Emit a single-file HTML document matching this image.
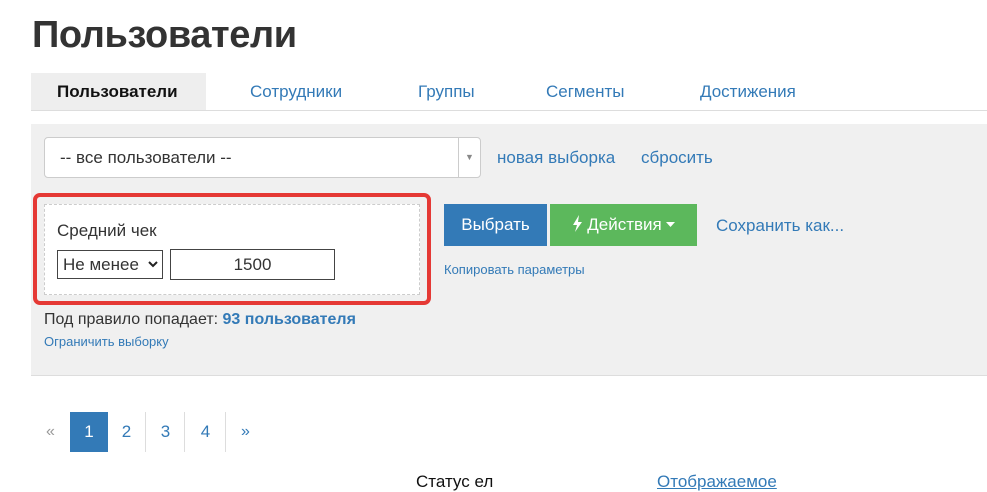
<!DOCTYPE html>
<html><head><meta charset="utf-8"><style>
*{box-sizing:border-box;margin:0;padding:0}
body{width:987px;height:479px;overflow:hidden;background:#fff;font-family:"Liberation Sans","DejaVu Sans",sans-serif;color:#333;position:relative}
.a{position:absolute}
h1{position:absolute;left:32px;top:14px;font-size:38px;font-weight:bold;color:#333;letter-spacing:-0.4px}
.tab{position:absolute;top:73px;height:37px;line-height:37px;font-size:17px;color:#337ab7}
.blue{color:#337ab7}
</style></head><body>
<h1>Пользователи</h1>
<div class="a" style="left:31px;top:73px;width:175px;height:38px;background:#eee"></div>
<div class="tab" style="left:57px;color:#111;font-weight:bold">Пользователи</div>
<div class="tab" style="left:250px">Сотрудники</div>
<div class="tab" style="left:418px">Группы</div>
<div class="tab" style="left:546px">Сегменты</div>
<div class="tab" style="left:700px">Достижения</div>
<div class="a" style="left:31px;top:110px;width:956px;height:1px;background:#ddd"></div>
<div class="a" style="left:31px;top:124px;width:956px;height:252px;background:#f0f0f0;border-bottom:1px solid #ddd"></div>
<div class="a" style="left:44px;top:137px;width:437px;height:41px;background:#fff;border:1px solid #ccc;border-radius:4px"></div>
<div class="a" style="left:458px;top:138px;width:1px;height:39px;background:#ccc"></div>
<div class="a" style="left:465px;top:152px;font-size:9px;color:#888">▼</div>
<div class="a" style="left:60px;top:148px;font-size:17px;color:#333">-- все пользователи --</div>
<div class="a blue" style="left:497px;top:148px;font-size:17px">новая выборка</div>
<div class="a blue" style="left:641px;top:148px;font-size:17px">сбросить</div>
<div class="a" style="left:33px;top:193px;width:398px;height:112px;border:4px solid #e53935;border-radius:7px"></div>
<div class="a" style="left:44px;top:204px;width:376px;height:91px;background:#fff;border:1px dashed #ccc"></div>
<div class="a" style="left:57px;top:221px;font-size:17px">Средний чек</div>
<div class="a" style="left:57px;top:250px;width:106px;height:29px;border:1px solid #444;background:#fff;font-size:17px;line-height:27px;padding-left:5px">Не менее<svg style="position:absolute;right:4px;top:10px" width="10" height="7" viewBox="0 0 10 7"><path d="M1 1l4 4 4-4" stroke="#222" stroke-width="2" fill="none"/></svg></div>
<div class="a" style="left:170px;top:249px;width:165px;height:31px;border:1px solid #444;background:#fff;font-size:17px;line-height:29px;text-align:center">1500</div>
<div class="a" style="left:444px;top:204px;width:103px;height:42px;background:#337ab7;color:#fff;font-size:17px;line-height:42px;text-align:center">Выбрать</div>
<div class="a" style="left:550px;top:204px;width:147px;height:42px;background:#5cb85c;color:#fff;font-size:17px;line-height:42px;text-align:center"><svg width="11" height="17" viewBox="0 0 11 17" style="vertical-align:-2px"><path d="M7 0L1 10h4l-2 7 7-10H6z" fill="#fff"/></svg> Действия <svg width="9" height="5" viewBox="0 0 9 5" style="vertical-align:3px"><path d="M0 0h9L4.5 5z" fill="#fff"/></svg></div>
<div class="a blue" style="left:716px;top:216px;font-size:17px">Сохранить как...</div>
<div class="a blue" style="left:444px;top:262px;font-size:13px">Копировать параметры</div>
<div class="a" style="left:44px;top:311px;font-size:16px">Под правило попадает: <b class="blue">93 пользователя</b></div>
<div class="a blue" style="left:44px;top:334px;font-size:13px">Ограничить выборку</div>
<div class="a" style="left:46px;top:423px;font-size:16px;color:#999">«</div>
<div class="a" style="left:70px;top:412px;width:38px;height:40px;background:#337ab7;color:#fff;font-size:17px;line-height:40px;text-align:center">1</div>
<div class="a blue" style="left:108px;top:412px;width:38px;height:40px;font-size:17px;line-height:40px;text-align:center;border-right:1px solid #ddd">2</div>
<div class="a blue" style="left:147px;top:412px;width:38px;height:40px;font-size:17px;line-height:40px;text-align:center;border-right:1px solid #ddd">3</div>
<div class="a blue" style="left:186px;top:412px;width:40px;height:40px;font-size:17px;line-height:40px;text-align:center;border-right:1px solid #ddd">4</div>
<div class="a blue" style="left:241px;top:423px;font-size:16px">»</div>
<div class="a" style="left:416px;top:472px;font-size:17px;color:#111">Статус ел</div>
<div class="a blue" style="left:657px;top:472px;font-size:17px;text-decoration:underline">Отображаемое</div>
</body></html>
